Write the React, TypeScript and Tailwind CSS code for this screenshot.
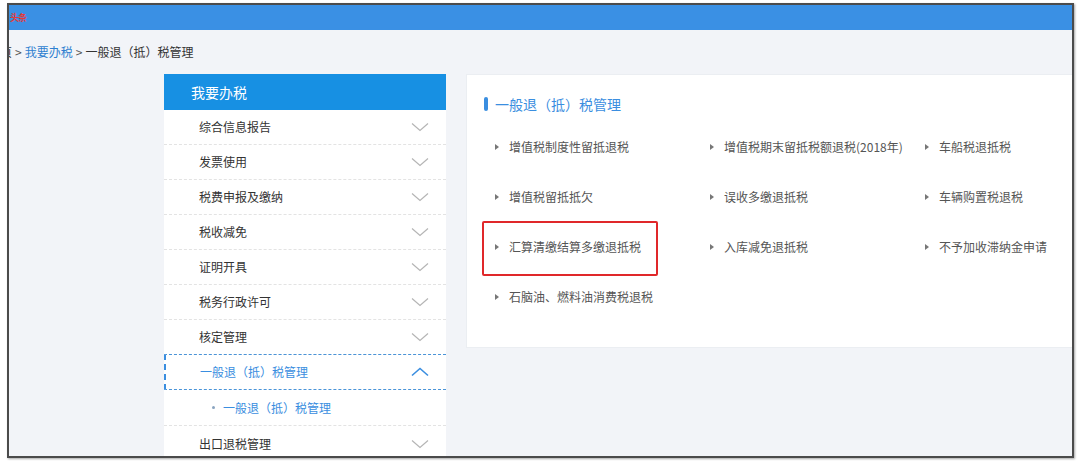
import React from "react";

const navItems = ["综合信息报告", "发票使用", "税费申报及缴纳", "税收减免", "证明开具", "税务行政许可", "核定管理"];

const cols = [
  ["增值税制度性留抵退税", "增值税留抵抵欠", "汇算清缴结算多缴退抵税", "石脑油、燃料油消费税退税"],
  ["增值税期末留抵税额退税(2018年)", "误收多缴退抵税", "入库减免退抵税"],
  ["车船税退抵税", "车辆购置税退税", "不予加收滞纳金申请"],
];

function ChevronDown({ color = "#b5b5b5" }: { color?: string }) {
  return (
    <svg width="18" height="10" viewBox="0 0 18 10" fill="none">
      <path d="M1 1.5 L9 8.5 L17 1.5" stroke={color} strokeWidth="1.2" />
    </svg>
  );
}

function ChevronUp({ color = "#3a8ee0" }: { color?: string }) {
  return (
    <svg width="18" height="10" viewBox="0 0 18 10" fill="none">
      <path d="M1 8.5 L9 1.5 L17 8.5" stroke={color} strokeWidth="1.6" />
    </svg>
  );
}

function Tri() {
  return <span className="inline-block w-0 h-0 border-y-[3px] border-y-transparent border-l-[4px] border-l-[#777] mr-[10px]" />;
}

function Item({ text, boxed }: { text: string; boxed?: boolean }) {
  return (
    <div className="relative h-[50px] flex items-center">
      <Tri />
      <span className="text-[12px] text-[#555] whitespace-nowrap">{text}</span>
      {boxed && (
        <div className="absolute left-[-13px] top-[-1px] w-[176px] h-[55px] border-2 border-[#e0282a] rounded-[2px]" />
      )}
    </div>
  );
}

export default function App() {
  return (
    <div
      className="w-[1080px] h-[463px] bg-white overflow-hidden"
      style={{ fontFamily: '"Microsoft YaHei", "Noto Sans CJK SC", "Noto Sans", sans-serif' }}
    >
      <div className="ml-[7px] mt-[3px] w-[1067px] h-[455px] border-2 border-[#4b4b4b] shadow-[1px_1px_2px_rgba(0,0,0,0.35)] overflow-hidden flex flex-col bg-[#f2f4f8]">
        <div className="h-[25px] bg-[#3a90e4] shrink-0 flex items-center pl-[1px]">
          <span className="text-[9px] font-bold text-[#e23a3a] leading-none tracking-[-1px]">头条</span>
        </div>
        <div className="h-[44px] shrink-0 flex items-center text-[12px] whitespace-nowrap">
          <span className="ml-[-9px] text-[#333]">页</span>
          <span className="text-[#555] mx-[3px]">&gt;</span>
          <span className="text-[#2f7fd0]">我要办税</span>
          <span className="text-[#555] mx-[3px]">&gt;</span>
          <span className="text-[#333]">一般退（抵）税管理</span>
        </div>
        <div className="flex gap-[20px] pl-[155px] flex-1">
          <div className="w-[282px] shrink-0 bg-white flex flex-col">
            <div className="h-[36px] bg-[#1790e3] flex items-center pl-[27px] text-[14px] text-white">我要办税</div>
            {navItems.map((t) => (
              <div key={t} className="h-[35px] flex items-center justify-between pl-[35px] pr-[17px] border-b border-dashed border-[#e3e3e3] text-[12px] text-[#333]">
                <span>{t}</span>
                <ChevronDown />
              </div>
            ))}
            <div className="h-[36px] flex items-center justify-between pl-[34px] pr-[17px] border-l-2 border-l-[#3a8ee0] border-y border-dashed border-y-[#4a94d8] text-[12px] text-[#3a8ee0] mt-[-1px]">
              <span>一般退（抵）税管理</span>
              <ChevronUp />
            </div>
            <div className="h-[36px] flex items-center pl-[48px] border-b border-dashed border-[#e3e3e3] text-[12px] text-[#3a8ee0]">
              <span className="w-[3px] h-[3px] rounded-full bg-[#8aa4c0] mr-[8px]" />
              <span>一般退（抵）税管理</span>
            </div>
            <div className="h-[35px] flex items-center justify-between pl-[35px] pr-[17px] text-[12px] text-[#333]">
              <span>出口退税管理</span>
              <ChevronDown />
            </div>
          </div>
          <div className="flex-1 self-start h-[274px] bg-white border border-[#ebeef2] pl-[17px] pt-[17px]">
            <div className="flex items-center h-[24px]">
              <span className="w-[4px] h-[14px] rounded-[2px] bg-[#3a8ee0] mr-[7px]" />
              <span className="text-[14px] text-[#3a8ee0]">一般退（抵）税管理</span>
            </div>
            <div className="flex mt-[6px] pl-[11px]">
              {cols.map((c, ci) => (
                <div key={ci} className={ci === 2 ? "w-[160px]" : "w-[215px]"}>
                  {c.map((t) => (
                    <Item key={t} text={t} boxed={t === "汇算清缴结算多缴退抵税"} />
                  ))}
                </div>
              ))}
            </div>
          </div>
        </div>
      </div>
    </div>
  );
}
